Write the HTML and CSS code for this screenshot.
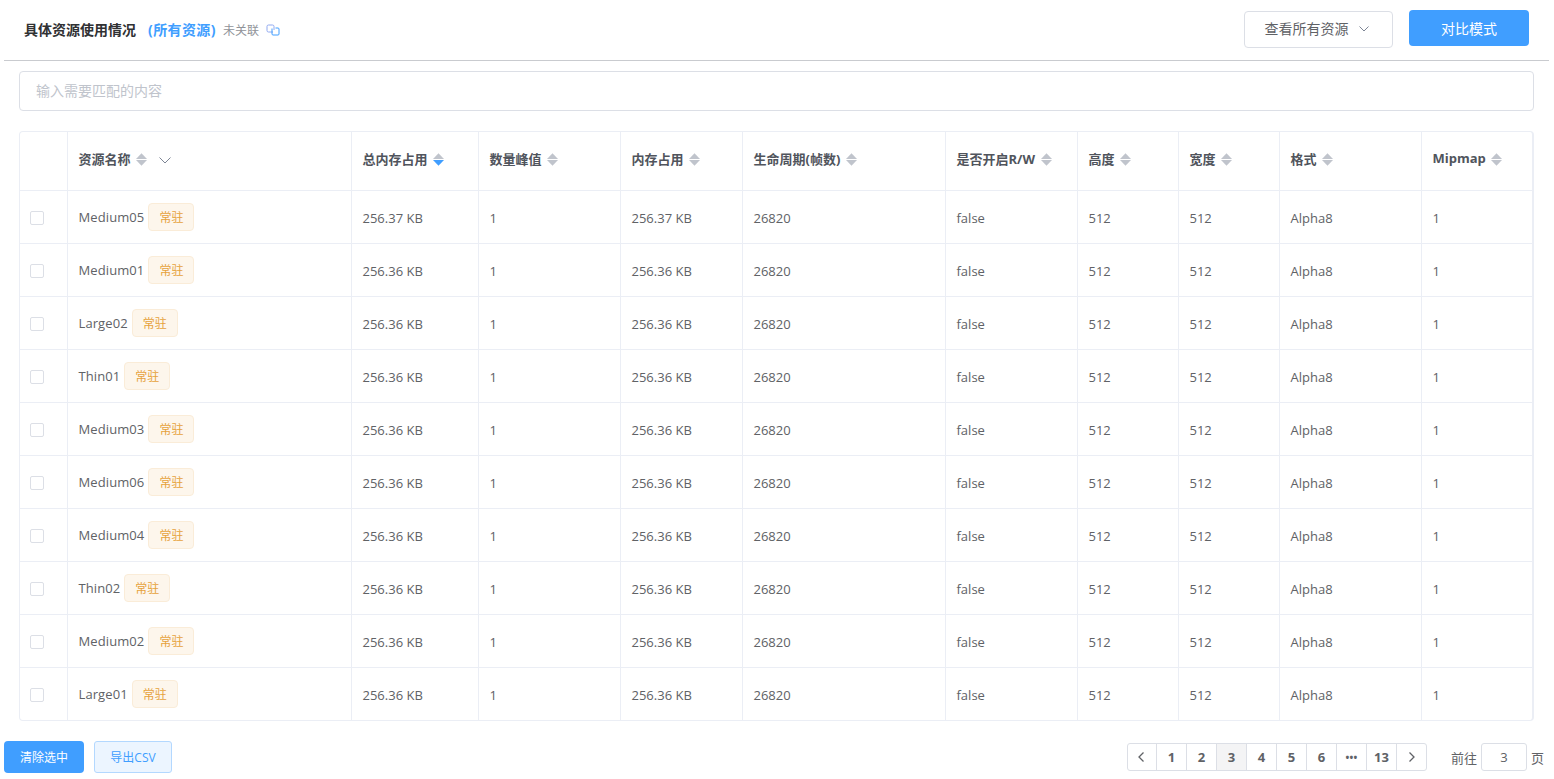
FILE: index.html
```html
<!DOCTYPE html>
<html lang="zh-CN">
<head>
<meta charset="utf-8">
<title>具体资源使用情况</title>
<link rel="stylesheet" href="styles.css">
</head>
<body>
<div class="page">
  <header class="topbar">
    <div class="title-group">
      <span class="title">具体资源使用情况</span>
      <span class="scope">(所有资源)</span>
      <span class="unlinked">未关联</span>
      <svg class="link-icon" width="14" height="12" viewBox="0 0 14 12" fill="none"><path d="M7 8H2.500A1.500 1.500 0 0 1 1 6.500V2.500A1.500 1.500 0 0 1 2.500 1H6.500A1.500 1.500 0 0 1 8 2.500V6" stroke="#8fa8f0"/><path d="M6 4.500V10A1 1 0 0 0 7 11H12A1 1 0 0 0 13 10V5A1 1 0 0 0 12 4H9.500" stroke="#409eff"/></svg>
    </div>
    <div class="top-actions">
      <button class="select-btn">查看所有资源<svg class="chev" width="10" height="6" viewBox="0 0 10 6" fill="none"><path d="M0.500 0.500L5 5L9.500 0.500" stroke="#7d8595"/></svg></button>
      <button class="primary-btn compare">对比模式</button>
    </div>
  </header>
  <div class="search-wrap"><input class="search" type="text" placeholder="输入需要匹配的内容"></div>
  <div class="table-wrap">
    <table class="data">
      <colgroup>
        <col class="c0"><col class="c1"><col class="c2"><col class="c3"><col class="c4"><col class="c5"><col class="c6"><col class="c7"><col class="c8"><col class="c9"><col class="c10">
      </colgroup>
      <thead id="head"></thead>
      <tbody id="body"></tbody>
    </table>
  </div>
  <footer class="footer">
    <div class="foot-left">
      <button class="primary-btn clear">清除选中</button>
      <button class="export">导出CSV</button>
    </div>
    <div class="foot-right">
      <ul class="pager">
        <li><svg width="7" height="10" viewBox="0 0 7 10" fill="none"><path d="M5.500 0.500L1 5L5.500 9.500" stroke="#606266" stroke-width="1.300"/></svg></li>
        <li>1</li><li>2</li><li class="active">3</li><li>4</li><li>5</li><li>6</li><li class="more">•••</li><li>13</li>
        <li><svg width="7" height="10" viewBox="0 0 7 10" fill="none"><path d="M1.500 0.500L6 5L1.500 9.500" stroke="#606266" stroke-width="1.300"/></svg></li>
      </ul>
      <span class="jump">前往</span><input class="page-input" type="text" value="3"><span class="jump">页</span>
    </div>
  </footer>
</div>
<script src="app.js"></script>
</body>
</html>
```
FILE: app.js
```js
var heads = ['总内存占用','数量峰值','内存占用','生命周期(帧数)','是否开启R/W','高度','宽度','格式','Mipmap'];
var sortIcon = function (cls) {
  return '<svg class="sort ' + cls + '" width="11" height="13" viewBox="0 0 11 13"><path class="up" d="M5.500 0.200L11 6H0Z"/><path class="down" d="M0 7H11L5.500 12.800Z"/></svg>';
};
var h = '<tr><th></th><th><span class="th-in">资源名称' + sortIcon('') +
  '<svg class="name-chev" width="12" height="7" viewBox="0 0 12 7" fill="none"><path d="M0.500 0.500L6 6L11.500 0.500" stroke="#7d8595"/></svg></span></th>';
heads.forEach(function (t, i) { h += '<th><span class="th-in">' + t + sortIcon(i === 0 ? 'desc' : '') + '</span></th>'; });
document.getElementById('head').innerHTML = h + '</tr>';
var names = ['Medium05','Medium01','Large02','Thin01','Medium03','Medium06','Medium04','Thin02','Medium02','Large01'];
var b = '';
names.forEach(function (n, i) {
  var size = i === 0 ? '256.37 KB' : '256.36 KB';
  b += '<tr><td><span class="check"></span></td><td class="name-cell"><span class="name">' + n + '</span><span class="tag">常驻</span></td>' +
    '<td>' + size + '</td><td>1</td><td>' + size + '</td><td>26820</td><td>false</td><td>512</td><td>512</td><td>Alpha8</td><td>1</td></tr>';
});
document.getElementById('body').innerHTML = b;
```
FILE: styles.css
```css
* { box-sizing: border-box; }
html, body { margin: 0; padding: 0; height: 100%; overflow: hidden; background: #fff; }
body { font-family: "Open Sans", "Noto Sans CJK SC", sans-serif; font-size: 13px; color: #606266; }
.page { padding: 0 4px; width: 1554px; height: 779px; }
.topbar { height: 61px; width: 1545px; border-bottom: 1px solid #c9cbcf; display: flex; justify-content: space-between; align-items: center; padding: 0 20px 1px 20px; }
.title-group { display: flex; align-items: center; }
.title { font-size: 14px; font-weight: 700; color: #303133; margin-top: -2px; }
.scope { font-size: 14px; font-weight: 700; color: #409eff; margin: -2px 0 0 12px; letter-spacing: 0.400px; }
.unlinked { font-size: 12px; color: #909399; margin-left: 7px; }
.link-icon { margin-left: 7px; }
.top-actions { display: flex; align-items: flex-start; gap: 16px; height: 38px; margin-top: 1px; }
button { font-family: inherit; cursor: pointer; }
.select-btn { width: 149px; height: 37px; background: #fff; border: 1px solid #dcdfe6; border-radius: 4px; font-size: 14px; color: #606266; display: flex; align-items: center; justify-content: center; gap: 10px; padding: 0 4px 3px 0; }
.select-btn .chev { margin-top: 2px; }
.primary-btn { background: #409eff; border: 0; border-radius: 4px; color: #fff; padding: 0; }
.compare { width: 120px; height: 36px; font-size: 14px; margin-top: -1px; }
.search-wrap { padding: 10px 15px 0; }
.search { display: block; width: 1515px; height: 40px; border: 1px solid #dcdfe6; border-radius: 4px; padding: 0 16px 2px; font: inherit; font-size: 14px; color: #606266; outline: 0; }
.search::placeholder { color: #c0c4cc; }
.table-wrap { margin: 20px 0 0 15px; width: 1515px; height: 590px; border: 1px solid #ebeef5; border-right-width: 2px; border-radius: 4px; overflow: hidden; }
.data { border-collapse: collapse; table-layout: fixed; width: 1513px; }
.c0 { width: 47px; } .c1 { width: 284px; } .c2 { width: 127px; } .c3 { width: 142px; } .c4 { width: 122px; } .c5 { width: 203px; }
.c6 { width: 132px; } .c7 { width: 101px; } .c8 { width: 101px; } .c9 { width: 142px; } .c10 { width: 112px; }
th, td { border: 1px solid #ebeef5; padding: 2px 10px 0 11px; text-align: left; white-space: nowrap; }
tr > :first-child { border-left: 0; }
tr > :last-child { border-right: 0; }
thead tr:first-child th { border-top: 0; }
tbody tr:last-child td { border-bottom: 0; }
th { height: 58px; font-size: 13px; font-weight: 700; color: #50545c; padding-top: 0; padding-bottom: 5px; }
td { height: 53px; font-size: 13px; color: #606266; }
td.name-cell { padding-top: 0; }
.th-in { display: inline-flex; align-items: center; }
.sort { margin: 2px 0 0 5.500px; fill: #c0c4cc; }
.sort.desc .down { fill: #409eff; }
.name-chev { margin: 4px 0 0 12px; }
.check { display: block; width: 14px; height: 14px; margin-left: -1px; border: 1px solid #dcdfe6; border-radius: 2px; }
.name { letter-spacing: 0.100px; }
.tag { display: inline-block; height: 28px; line-height: 28px; padding: 0 10px; margin-left: 4px; border: 1px solid #faecd8; border-radius: 4px; background: #fdf6ec; color: #e6a23c; font-size: 12px; }
.footer { display: flex; justify-content: space-between; margin-top: 20px; }
.foot-left { display: flex; gap: 10px; }
.clear { width: 80px; height: 32px; font-size: 12px; }
.export { width: 78px; height: 32px; font-size: 12px; background: #ecf5ff; border: 1px solid #b3d8ff; border-radius: 3px; color: #409eff; padding: 0; }
.foot-right { display: flex; align-items: center; margin-top: 2px; height: 28px; padding-right: 6px; }
.pager { display: flex; list-style: none; margin: 0 24px 0 0; padding: 0; height: 28px; border: 1px solid #dcdfe6; border-radius: 3px; }
.pager li { width: 30px; height: 26px; display: flex; align-items: center; justify-content: center; font-size: 13px; font-weight: 700; color: #606266; border-left: 1px solid #dcdfe6; }
.pager li:first-child { border-left: 0; width: 28px; }
.pager li.active { background: #f4f4f5; }
.pager li.more { font-size: 10px; letter-spacing: 0.300px; }
.jump { font-size: 13px; color: #606266; }
.page-input { width: 46px; height: 28px; margin: 0 4px; border: 1px solid #dcdfe6; border-radius: 3px; text-align: center; font: inherit; color: #606266; padding: 0; outline: 0; }
```
